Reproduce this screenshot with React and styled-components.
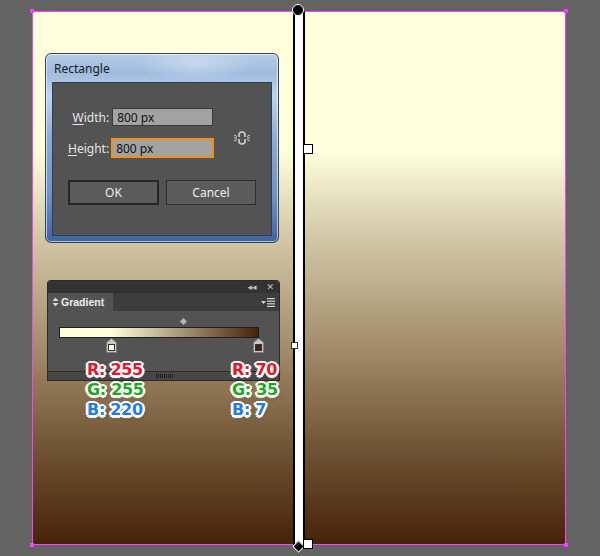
import React from 'react';
import styled, { createGlobalStyle } from 'styled-components';

const GlobalStyle = createGlobalStyle`
  html, body {
    margin: 0;
    padding: 0;
    background: #636363;
  }
`;

const Canvas = styled.div`
  position: relative;
  width: 600px;
  height: 556px;
  overflow: hidden;
  background: #636363;
  padding: 11px 0 0 32px;
  box-sizing: border-box;
  font-family: "Noto Sans", "Liberation Sans", sans-serif;
`;

const Artboard = styled.div`
  position: relative;
  width: 534px;
  height: 534px;
  box-sizing: border-box;
  border: 1px solid #ff3cff;
  background: linear-gradient(to bottom, #ffffdc 0%, #ffffdc 26%, #d8cfae 40%, #a58f6c 62%, #705434 82%, #462307 100%);
`;

const Corner = styled.div`
  position: absolute;
  width: 4px;
  height: 4px;
  background: #ff3cff;
  ${p => (p.$top ? 'top: -3px;' : 'bottom: -3px;')}
  ${p => (p.$left ? 'left: -3px;' : 'right: -3px;')}
`;

const GradientLine = styled.div`
  position: absolute;
  left: 260px;
  top: -1px;
  width: 12px;
  height: 535px;
  box-sizing: border-box;
  border-left: 2px solid #000;
  border-right: 2px solid #000;
  background: #fff;
`;

const StartDot = styled.div`
  position: absolute;
  left: -3px;
  top: -7px;
  width: 10px;
  height: 10px;
  border-radius: 50%;
  background: #000;
  border: 1.5px solid #fff;
`;

const StopBox = styled.div`
  position: absolute;
  left: 8px;
  top: ${p => p.$top}px;
  width: 8px;
  height: 8px;
  background: #fff;
  border: 1.5px solid #000;
`;

const EndDiamond = styled.div`
  position: absolute;
  left: -1px;
  bottom: -5px;
  width: 7px;
  height: 7px;
  background: #000;
  border: 1.5px solid #fff;
  transform: rotate(45deg);
`;

const MidBox = styled.div`
  position: absolute;
  left: -4px;
  top: 331px;
  width: 5px;
  height: 5px;
  background: #fff;
  border: 1px solid #333;
`;

/* ---------- Rectangle dialog ---------- */

const Dialog = styled.div`
  position: absolute;
  left: 45px;
  top: 53px;
  width: 234px;
  height: 190px;
  box-sizing: border-box;
  border-radius: 6px;
  border: 1px solid #34435a;
  background:
    radial-gradient(ellipse 60px 18px at 150px 10px, rgba(255, 255, 255, 0.35), transparent),
    linear-gradient(to bottom, #b6cbe6 0%, #9fbbdf 10%, #c2d4ec 22%, #8aacd6 45%, #6f93c6 75%, #3c64a4 100%);
  box-shadow: inset 0 0 0 1px rgba(255, 255, 255, 0.6);
  display: flex;
  flex-direction: column;
  padding: 0 6px 6px 6px;
`;

const DialogTitle = styled.div`
  height: 28px;
  display: flex;
  align-items: center;
  padding-left: 2px;
  font-size: 12px;
  color: #1a1a1a;
`;

const DialogBody = styled.div`
  flex: 1;
  background: #535353;
  border: 1px solid #2f3d55;
  padding: 25px 0 0 15px;
  display: flex;
  flex-direction: column;
`;

const SizeArea = styled.div`
  display: flex;
  align-items: center;
`;

const Fields = styled.div`
  display: grid;
  grid-template-columns: auto auto;
  row-gap: 12px;
  column-gap: 3px;
  align-items: center;
`;

const FieldLabel = styled.label`
  font-size: 12px;
  color: #e6e6e6;
  text-align: right;
  u {
    text-decoration-thickness: 1px;
    text-underline-offset: 2px;
  }
`;

const FieldInput = styled.div`
  width: ${p => (p.$focus ? '103px' : '101px')};
  height: ${p => (p.$focus ? '20px' : '18px')};
  box-sizing: border-box;
  background: #a2a2a2;
  border: ${p => (p.$focus ? '2px solid #f39019' : '1px solid #3a3a3a')};
  font-size: 12px;
  color: #111;
  padding-left: ${p => (p.$focus ? '3px' : '4px')};
  display: flex;
  align-items: center;
  margin-left: ${p => (p.$focus ? '-1px' : '0')};
`;

const LinkIcon = styled.svg`
  margin-left: 20px;
  margin-top: 10px;
`;

const Buttons = styled.div`
  display: flex;
  gap: 7px;
  margin-top: 22px;
`;

const Button = styled.div`
  width: ${p => p.$w}px;
  height: 25px;
  box-sizing: border-box;
  background: #5b5b5b;
  border: ${p => (p.$primary ? '2px solid #262626' : '1px solid #2e2e2e')};
  color: #ececec;
  font-size: 12px;
  display: flex;
  align-items: center;
  justify-content: center;
`;

/* ---------- Gradient panel ---------- */

const Panel = styled.div`
  position: absolute;
  left: 48px;
  top: 281px;
  width: 231px;
  height: 99px;
  display: flex;
  flex-direction: column;
  border-radius: 3px 3px 0 0;
  overflow: hidden;
  box-shadow: 0 0 0 1px #2a2a2a;
`;

const PanelTop = styled.div`
  height: 12px;
  background: #323232;
  display: flex;
  justify-content: flex-end;
  align-items: center;
  gap: 10px;
  padding-right: 5px;
  color: #c4c4c4;
  font-size: 9px;
  font-family: "DejaVu Sans", sans-serif;
`;

const TabRow = styled.div`
  height: 18px;
  background: #3d3d3d;
  display: flex;
  align-items: stretch;
  justify-content: space-between;
`;

const Tab = styled.div`
  width: 65px;
  background: #535353;
  display: flex;
  align-items: center;
  gap: 2px;
  padding-left: 4px;
  box-sizing: border-box;
  color: #f0f0f0;
  font-size: 10.5px;
  font-weight: 700;
  font-family: "Liberation Sans", sans-serif;
`;

const MenuIcon = styled.svg`
  align-self: center;
  margin-right: 4px;
`;

const PanelBody = styled.div`
  flex: 1;
  background: #535353;
  position: relative;
  padding: 16px 0 0 11px;
`;

const RampBar = styled.div`
  width: 200px;
  height: 11px;
  box-sizing: border-box;
  border: 1px solid #1e1e1e;
  background: linear-gradient(to right, #ffffdc 0%, #ffffdc 26%, #462307 100%);
`;

const MidDiamond = styled.div`
  position: absolute;
  left: 133px;
  top: 8px;
  width: 5px;
  height: 5px;
  background: #b4b4b4;
  transform: rotate(45deg);
`;

const Stop = styled.svg`
  position: absolute;
  top: 27px;
  left: ${p => p.$x}px;
`;

const Grip = styled.div`
  position: absolute;
  right: 2px;
  bottom: 1px;
  width: 2px;
  height: 9px;
  background: repeating-linear-gradient(to bottom, #8a8a8a 0 1px, transparent 1px 2px);
`;

const PanelFoot = styled.div`
  height: 8px;
  background: #474747;
  border-top: 1px solid #2e2e2e;
  display: flex;
  justify-content: center;
  align-items: center;
`;

const FootGrip = styled.div`
  width: 18px;
  height: 4px;
  margin-left: 2px;
  background: repeating-linear-gradient(to right, #1e1e1e 0 1px, transparent 1px 2px);
`;

/* ---------- colour annotations ---------- */

const Notes = styled.div`
  position: absolute;
  left: ${p => p.$x}px;
  top: 360px;
  display: flex;
  flex-direction: column;
`;

const Note = styled.div`
  font-family: "DejaVu Sans", sans-serif;
  font-weight: 700;
  font-size: 16px;
  line-height: 20px;
  letter-spacing: -0.3px;
  color: ${p => p.$c};
  white-space: pre;
  text-shadow:
    -2px 0 0 #fff, 2px 0 0 #fff, 0 -2px 0 #fff, 0 2px 0 #fff,
    -1.5px -1.5px 0 #fff, 1.5px -1.5px 0 #fff, -1.5px 1.5px 0 #fff, 1.5px 1.5px 0 #fff,
    -2.5px 0 1px #fff, 2.5px 0 1px #fff, 0 2.5px 1px #fff,
    1px 2px 4px rgba(0, 0, 0, 0.45);
`;

const channels = [
  { k: 'R', c: '#e8142c' },
  { k: 'G', c: '#1ea81e' },
  { k: 'B', c: '#1d7fe6' },
];

const StopMarker = ({ x, fill }) => (
  <Stop $x={x} width="11" height="15" viewBox="0 0 11 15">
    <path d="M5.5 0.5 L10.5 4.5 V14.5 H0.5 V4.5 Z" fill="#c8c8c8" stroke="#7a7a7a" />
    <rect x="2.5" y="6.5" width="6" height="6" fill={fill} stroke="#333" />
  </Stop>
);

export default function App() {
  return (
    <>
      <GlobalStyle />
      <Canvas>
        <Artboard>
          <Corner $top $left />
          <Corner $top />
          <Corner $left />
          <Corner />
          <GradientLine>
            <StartDot />
            <StopBox $top={133} />
            <MidBox />
            <EndDiamond />
            <StopBox $top={528} />
          </GradientLine>
        </Artboard>

        <Dialog>
          <DialogTitle>Rectangle</DialogTitle>
          <DialogBody>
            <SizeArea>
              <Fields>
                <FieldLabel>
                  <u>W</u>idth:
                </FieldLabel>
                <FieldInput>800 px</FieldInput>
                <FieldLabel>
                  <u>H</u>eight:
                </FieldLabel>
                <FieldInput $focus>800 px</FieldInput>
              </Fields>
              <LinkIcon width="16" height="14" viewBox="0 0 16 14">
                <rect x="5" y="1" width="6" height="12" rx="3" fill="none" stroke="#cfcfcf" strokeWidth="1.6" />
                <line x1="4" y1="7" x2="12" y2="7" stroke="#535353" strokeWidth="2" />
                <g stroke="#cfcfcf" strokeWidth="1">
                  <line x1="0" y1="4" x2="3" y2="5.5" />
                  <line x1="0" y1="7" x2="3" y2="7" />
                  <line x1="0" y1="10" x2="3" y2="8.5" />
                  <line x1="16" y1="4" x2="13" y2="5.5" />
                  <line x1="16" y1="7" x2="13" y2="7" />
                  <line x1="16" y1="10" x2="13" y2="8.5" />
                </g>
              </LinkIcon>
            </SizeArea>
            <Buttons>
              <Button $primary $w={91}>OK</Button>
              <Button $w={90}>Cancel</Button>
            </Buttons>
          </DialogBody>
        </Dialog>

        <Panel>
          <PanelTop>
            <span>◂◂</span>
            <span>✕</span>
          </PanelTop>
          <TabRow>
            <Tab>
              <svg width="7" height="10" viewBox="0 0 7 10">
                <path d="M3.5 0.5 L6.5 4 H0.5 Z M3.5 9.5 L6.5 6 H0.5 Z" fill="#d8d8d8" />
              </svg>
              Gradient
            </Tab>
            <MenuIcon width="14" height="9" viewBox="0 0 14 9">
              <path d="M0 3 H5 L2.5 6 Z" fill="#d0d0d0" />
              <g fill="#d0d0d0">
                <rect x="6" y="0" width="8" height="1.2" />
                <rect x="6" y="2.6" width="8" height="1.2" />
                <rect x="6" y="5.2" width="8" height="1.2" />
                <rect x="6" y="7.8" width="8" height="1.2" />
              </g>
            </MenuIcon>
          </TabRow>
          <PanelBody>
            <MidDiamond />
            <RampBar />
            <StopMarker x={58} fill="#ffffdc" />
            <StopMarker x={205} fill="#462307" />
            <Grip />
          </PanelBody>
          <PanelFoot>
            <FootGrip />
          </PanelFoot>
        </Panel>

        <Notes $x={87}>
          {channels.map((ch, i) => (
            <Note key={ch.k} $c={ch.c}>{`${ch.k}: ${[255, 255, 220][i]}`}</Note>
          ))}
        </Notes>
        <Notes $x={232}>
          {channels.map((ch, i) => (
            <Note key={ch.k} $c={ch.c}>{`${ch.k}: ${[70, 35, 7][i]}`}</Note>
          ))}
        </Notes>
      </Canvas>
    </>
  );
}
